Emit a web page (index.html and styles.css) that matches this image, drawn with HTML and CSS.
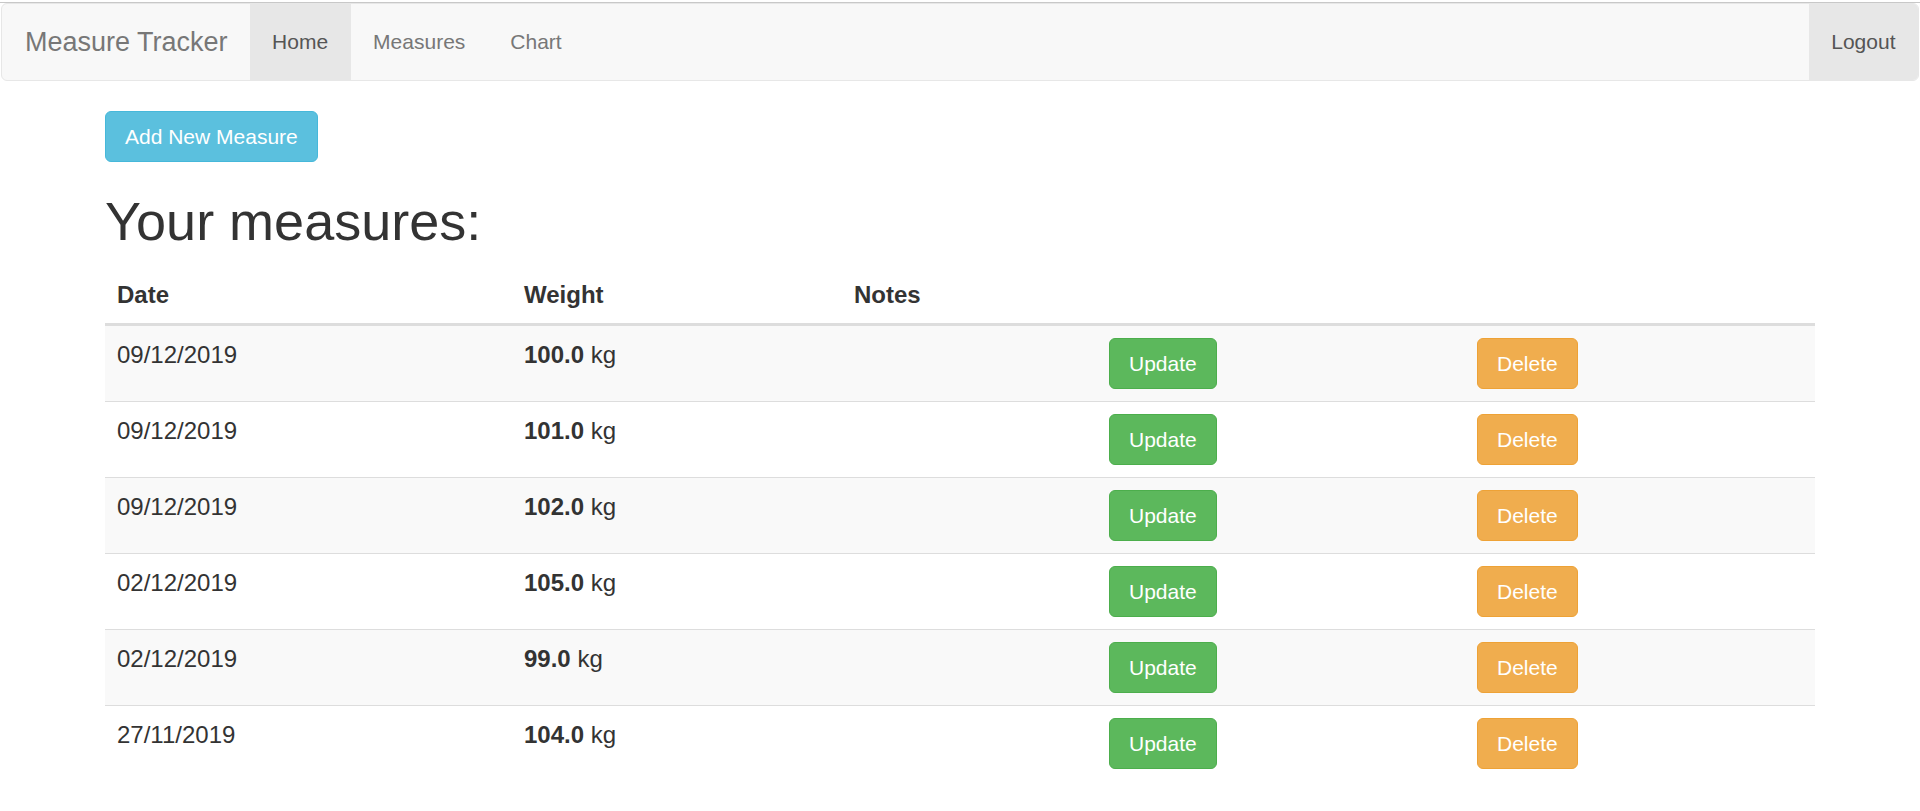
FILE: index.html
```html
<!DOCTYPE html>
<html lang="en">
<head>
<meta charset="utf-8">
<title>Measure Tracker</title>
<link rel="stylesheet" href="styles.css">
</head>
<body>
<div class="top-line"></div>
<nav class="navbar">
  <a class="navbar-brand" href="#">Measure Tracker</a>
  <ul class="nav">
    <li class="active"><a href="#">Home</a></li>
    <li><a href="#">Measures</a></li>
    <li><a href="#">Chart</a></li>
  </ul>
  <ul class="nav nav-right">
    <li class="active"><a href="#">Logout</a></li>
  </ul>
</nav>
<main class="container">
  <a class="btn btn-info" href="#">Add New Measure</a>
  <h1 class="title">Your measures:</h1>
  <table class="table">
    <colgroup>
      <col class="c-date"><col class="c-weight"><col class="c-notes"><col class="c-update"><col class="c-delete">
    </colgroup>
    <thead>
      <tr><th>Date</th><th>Weight</th><th>Notes</th><th></th><th></th></tr>
    </thead>
    <tbody>
      <tr><td>09/12/2019</td><td><b>100.0</b> kg</td><td></td><td><a class="btn btn-success" href="#">Update</a></td><td><a class="btn btn-warning" href="#">Delete</a></td></tr>
      <tr><td>09/12/2019</td><td><b>101.0</b> kg</td><td></td><td><a class="btn btn-success" href="#">Update</a></td><td><a class="btn btn-warning" href="#">Delete</a></td></tr>
      <tr><td>09/12/2019</td><td><b>102.0</b> kg</td><td></td><td><a class="btn btn-success" href="#">Update</a></td><td><a class="btn btn-warning" href="#">Delete</a></td></tr>
      <tr><td>02/12/2019</td><td><b>105.0</b> kg</td><td></td><td><a class="btn btn-success" href="#">Update</a></td><td><a class="btn btn-warning" href="#">Delete</a></td></tr>
      <tr><td>02/12/2019</td><td><b>99.0</b> kg</td><td></td><td><a class="btn btn-success" href="#">Update</a></td><td><a class="btn btn-warning" href="#">Delete</a></td></tr>
      <tr><td>27/11/2019</td><td><b>104.0</b> kg</td><td></td><td><a class="btn btn-success" href="#">Update</a></td><td><a class="btn btn-warning" href="#">Delete</a></td></tr>
    </tbody>
  </table>
</main>
</body>
</html>
```

FILE: styles.css
```css
* { box-sizing: border-box; }

html, body { overflow: hidden; }

body {
  margin: 0;
  font-family: "Liberation Sans", Arial, Helvetica, sans-serif;
  font-size: 21px;
  line-height: 30px;
  color: #333;
  background: #fff;
}

a { text-decoration: none; }

.top-line {
  height: 1px;
  margin-top: 2px;
  background: #c8c8c8;
}

.navbar {
  display: flex;
  align-items: stretch;
  margin: 0 1px 30px 1px;
  height: 78px;
  background: #f8f8f8;
  border: 1px solid #e7e7e7;
  border-radius: 6px;
  overflow: hidden;
}

.navbar-brand {
  display: block;
  padding: 23px 22px 23px 23px;
  font-size: 27px;
  line-height: 30px;
  color: #777;
}

.nav {
  display: flex;
  margin: 0;
  padding: 0;
  list-style: none;
}

.nav-right { margin-left: auto; }

.nav li a {
  display: block;
  height: 100%;
  padding: 23px 22.5px;
  line-height: 30px;
  font-size: 21px;
  color: #777;
}

.nav li.active a {
  color: #555;
  background: #e7e7e7;
}

.container {
  width: 1710px;
  margin: 0 auto;
}

.btn {
  display: inline-block;
  padding: 9px 19px;
  font-size: 21px;
  line-height: 31px;
  color: #fff;
  border: 1px solid transparent;
  border-radius: 6px;
  white-space: nowrap;
}

.btn-info { background: #5bc0de; border-color: #46b8da; }
.btn-success { background: #5cb85c; border-color: #4cae4c; }
.btn-warning { background: #f0ad4e; border-color: #eea236; }

.title {
  margin: 30px 0 15px 0;
  font-size: 54px;
  font-weight: 500;
  line-height: 59.4px;
  color: #333;
}

.table {
  width: 100%;
  table-layout: fixed;
  border-collapse: collapse;
  border-spacing: 0;
  margin: 0;
  font-size: 24px;
}

.c-date { width: 407px; }
.c-weight { width: 330px; }
.c-notes { width: 255px; }
.c-update { width: 368px; }
.c-delete { width: 350px; }

.table th {
  padding: 12px;
  text-align: left;
  font-weight: bold;
  line-height: 33px;
  vertical-align: bottom;
  border-bottom: 3px solid #ddd;
}

.table td {
  padding: 12px;
  line-height: 33px;
  vertical-align: top;
  border-top: 1px solid #ddd;
  height: 75px;
}

.table tbody tr:first-child td { border-top: 0; }

.table tbody tr:nth-child(odd) { background: #f9f9f9; }
```
